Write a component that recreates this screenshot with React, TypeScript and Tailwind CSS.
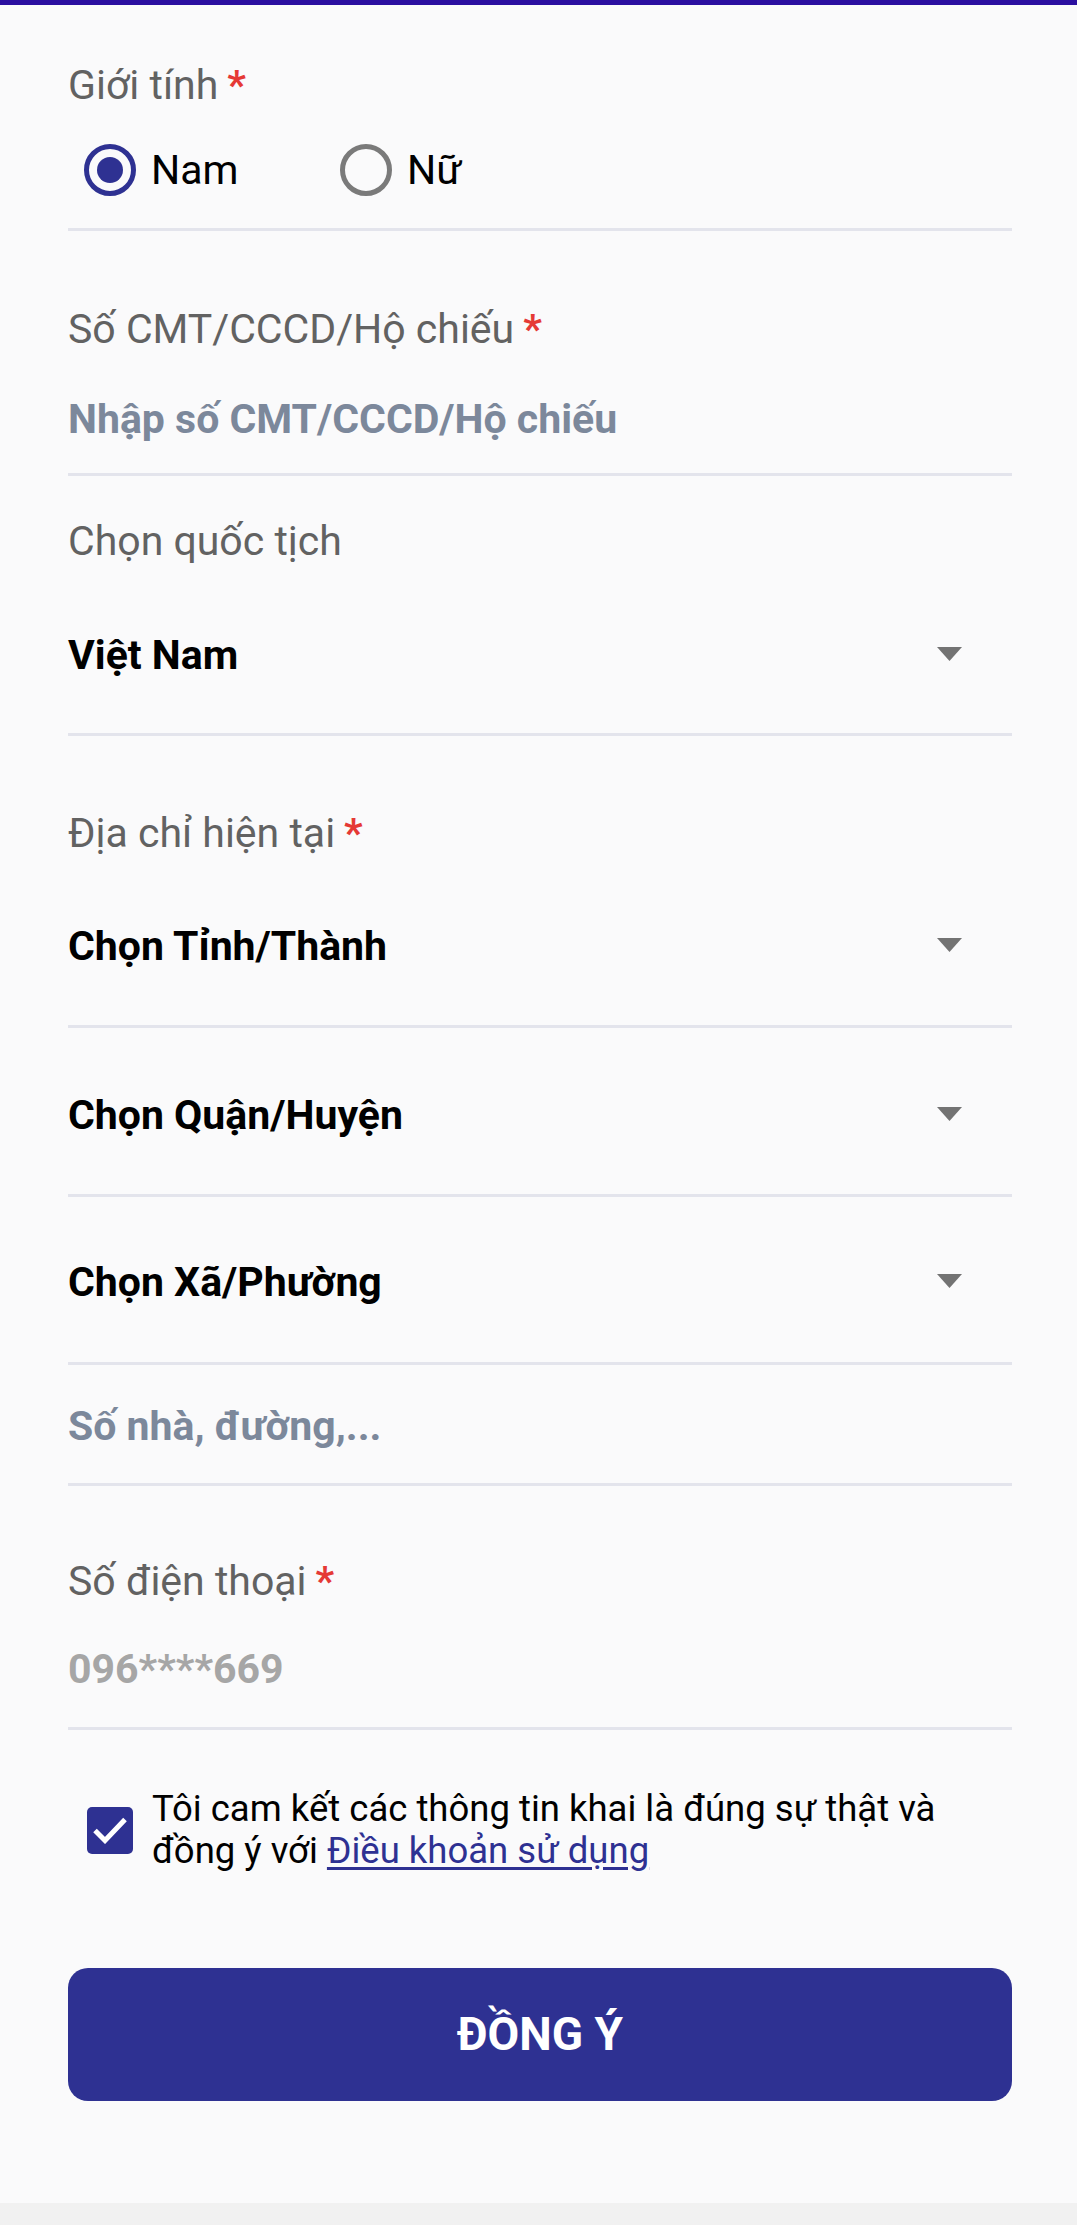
import { useState } from 'react';

const NAVY = 'bg-[#2e3192]';

function Label({ text, required, className = '' }: { text: string; required?: boolean; className?: string }) {
  return (
    <div className={`text-[41px] leading-[50px] text-[#626262] ${className}`}>
      {text}
      {required && <span className="ml-[9px] text-[#e53935] font-bold">*</span>}
    </div>
  );
}

function Divider({ className = '' }: { className?: string }) {
  return <div className={`h-[3px] bg-[#e3e4ec] ${className}`} />;
}

function SelectRow({ value, className = '' }: { value: string; className?: string }) {
  return (
    <div className={`flex items-center justify-between pr-[50px] ${className}`}>
      <span className="text-[41px] leading-[50px] font-bold text-black">{value}</span>
      <svg width="25" height="14" viewBox="0 0 25 14" className="mt-[-2px]">
        <path d="M0 0h25L12.5 14z" fill="#737373" />
      </svg>
    </div>
  );
}

function Radio({ checked, label, onClick }: { checked: boolean; label: string; onClick: () => void }) {
  return (
    <button type="button" onClick={onClick} className="flex items-center gap-[15px] w-[256px]">
      <span
        className={`w-[52px] h-[52px] rounded-full border-[5px] flex items-center justify-center flex-shrink-0 ${checked ? 'border-[#2e3192]' : 'border-[#7a7a7a]'}`}
      >
        {checked && <span className={`w-[26px] h-[26px] rounded-full ${NAVY}`} />}
      </span>
      <span className="text-[41px] leading-[50px] text-black">{label}</span>
    </button>
  );
}

export default function App() {
  const [gender, setGender] = useState<'nam' | 'nu'>('nam');
  const [agreed, setAgreed] = useState(true);

  return (
    <div className="min-h-[2225px] bg-[#fafafb] font-['Roboto','Noto_Sans',sans-serif] flex flex-col">
      <div className="h-[5px] bg-[#2b0fa0]" />

      <div className="pl-[68px] pr-[65px] flex flex-col">
        {/* Giới tính */}
        <Label text="Giới tính" required className="mt-[55px]" />
        <div className="mt-[34px] pl-[16px] flex items-center">
          <Radio checked={gender === 'nam'} label="Nam" onClick={() => setGender('nam')} />
          <Radio checked={gender === 'nu'} label="Nữ" onClick={() => setGender('nu')} />
        </div>
        <Divider className="mt-[32px]" />

        {/* Giấy tờ */}
        <Label text="Số CMT/CCCD/Hộ chiếu" required className="mt-[73px]" />
        <div className="mt-[40px] text-[41px] leading-[50px] font-bold text-[#7c889b]">Nhập số CMT/CCCD/Hộ chiếu</div>
        <Divider className="mt-[29px]" />

        {/* Quốc tịch */}
        <Label text="Chọn quốc tịch" className="mt-[40px]" />
        <SelectRow value="Việt Nam" className="mt-[64px]" />
        <Divider className="mt-[53px]" />

        {/* Địa chỉ */}
        <Label text="Địa chỉ hiện tại" required className="mt-[72px]" />
        <SelectRow value="Chọn Tỉnh/Thành" className="mt-[63px]" />
        <Divider className="mt-[54px]" />
        <SelectRow value="Chọn Quận/Huyện" className="mt-[62px]" />
        <Divider className="mt-[54px]" />
        <SelectRow value="Chọn Xã/Phường" className="mt-[60px]" />
        <Divider className="mt-[55px]" />
        <div className="mt-[36px] text-[41px] leading-[50px] font-bold text-[#7c889b]">Số nhà, đường,...</div>
        <Divider className="mt-[32px]" />

        {/* Điện thoại */}
        <Label text="Số điện thoại" required className="mt-[70px]" />
        <div className="mt-[38px] text-[41px] leading-[50px] font-bold text-[#a6a6a6]">096****669</div>
        <Divider className="mt-[33px]" />

        {/* Cam kết */}
        <div className="mt-[58px] pl-[19px] flex items-center gap-[19px]">
          <button
            type="button"
            onClick={() => setAgreed(!agreed)}
            className={`w-[46px] h-[47px] rounded-[5px] flex items-center justify-center flex-shrink-0 ${agreed ? NAVY : 'border-[4px] border-[#7a7a7a]'}`}
          >
            {agreed && (
              <svg width="36" height="28" viewBox="0 0 36 28">
                <path d="M3 14.5l10 10L33 3.5" fill="none" stroke="white" strokeWidth="5" />
              </svg>
            )}
          </button>
          <p className="text-[36.5px] leading-[42px] text-black">
            Tôi cam kết các thông tin khai là đúng sự thật và
            <br />
            đồng ý với{' '}
            <a href="#" className="text-[#2e3192] underline underline-offset-[4px]">Điều khoản sử dụng</a>
          </p>
        </div>

        <button
          type="button"
          className={`mt-[96px] h-[133px] rounded-[20px] ${NAVY} text-white text-[46px] font-bold`}
        >
          ĐỒNG Ý
        </button>
      </div>

      <div className="mt-[102px] h-[22px] bg-[#f1f1f1]" />
    </div>
  );
}
